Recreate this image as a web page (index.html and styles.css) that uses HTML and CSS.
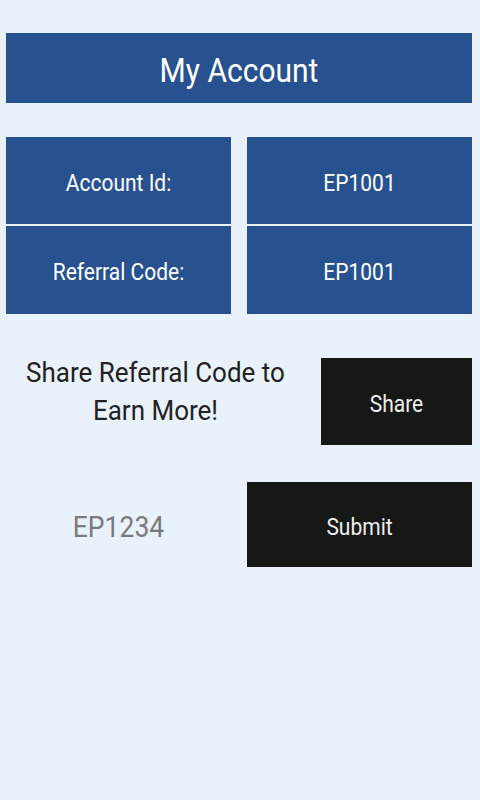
FILE: index.html
```html
<!DOCTYPE html>
<html lang="en">
<head>
    <meta charset="UTF-8">
    <meta name="viewport" content="width=device-width, initial-scale=1.0">
    <title>My Account</title>
    <link rel="stylesheet" href="styles.css">
</head>
<body>
    <div class="page">
        <div class="header"><span class="txt">My Account</span></div>

        <div class="info-grid">
            <div class="cell"><span class="txt">Account Id:</span></div>
            <div class="cell"><span class="txt">EP1001</span></div>
            <div class="cell"><span class="txt">Referral Code:</span></div>
            <div class="cell"><span class="txt">EP1001</span></div>
        </div>

        <div class="share-row">
            <p class="share-text">Share Referral Code to<br>Earn More!</p>
            <button class="btn share-btn"><span class="txt">Share</span></button>
        </div>

        <div class="submit-row">
            <p class="code"><span class="txt">EP1234</span></p>
            <button class="btn submit-btn"><span class="txt">Submit</span></button>
        </div>
    </div>
</body>
</html>
```

FILE: styles.css
```css
body {
    margin: 0;
    font-family: Roboto, "Liberation Sans", Arial, sans-serif;
    background-color: #e9f1fa;
    color: #222;
}
.page {
    padding: 33px 8px 0 6px;
}
.txt {
    display: inline-block;
    transform: translateY(2px) scaleY(1.1);
}
.header {
    height: 70px;
    background-color: #27528f;
    color: #fff;
    font-size: 30px;
    display: flex;
    align-items: center;
    justify-content: center;
}
.info-grid {
    margin-top: 34px;
    display: grid;
    grid-template-columns: 1fr 1fr;
    grid-template-rows: 87px 88px;
    column-gap: 16px;
    row-gap: 2px;
}
.cell {
    background-color: #27528f;
    color: #fff;
    font-size: 21px;
    display: flex;
    align-items: center;
    justify-content: center;
}
.share-row {
    margin-top: 44px;
    display: flex;
    gap: 16px;
}
.share-text {
    flex: 1;
    margin: -2px 0 0;
    font-size: 26px;
    line-height: 36px;
    text-align: center;
    transform: scaleY(1.08);
}
.btn {
    border: none;
    border-radius: 0;
    background-color: #161816;
    color: #eee;
    font-family: inherit;
    font-size: 21px;
    padding: 0;
    cursor: pointer;
}
.share-btn {
    width: 151px;
    height: 87px;
}
.submit-row {
    margin-top: 37px;
    display: grid;
    grid-template-columns: 1fr 1fr;
    column-gap: 16px;
    align-items: center;
}
.code {
    margin: 0;
    font-size: 26.5px;
    color: #7a7a7a;
    text-align: center;
}
.submit-btn {
    height: 85px;
}
```
